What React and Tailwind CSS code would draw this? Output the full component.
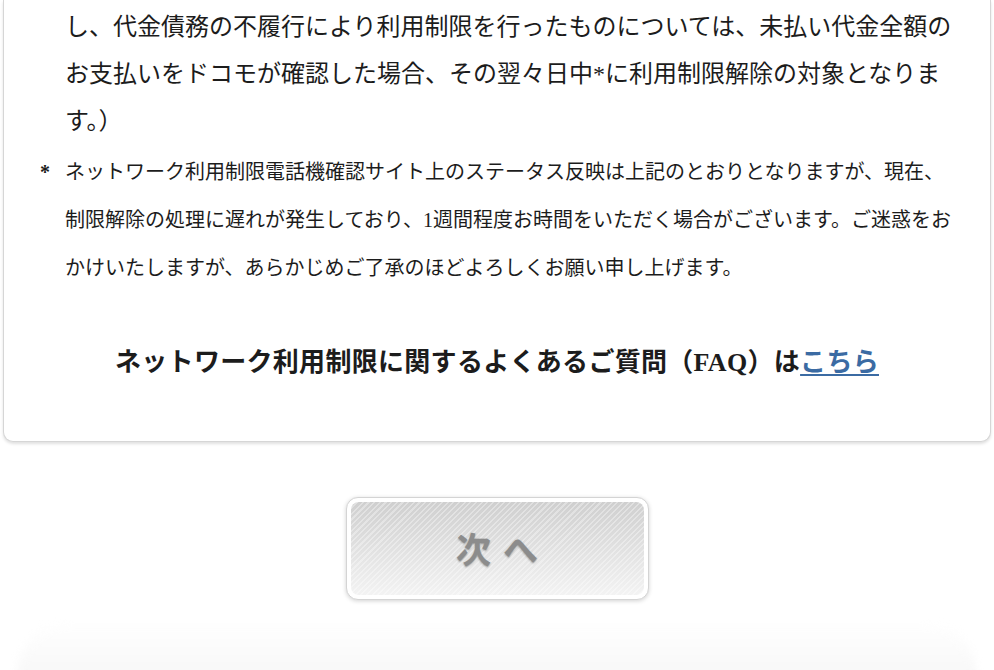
import React from "react";

const serif = "font-['Liberation_Serif','Noto_Sans_CJK_JP',serif]";

function NextButton() {
    return (
        <div className="flex justify-center">
            <div className="w-[303px] h-[103px] rounded-[12px] border border-[#d4d4d4] bg-white p-[4px] shadow-[0_1px_4px_rgba(0,0,0,0.18)]">
                <div className="h-full w-full rounded-[8px] flex items-center justify-center bg-[image:repeating-linear-gradient(135deg,rgba(255,255,255,0.35)_0px,rgba(255,255,255,0.35)_1.5px,transparent_1.5px,transparent_4px),linear-gradient(to_bottom,#cfcfcf,#f3f3f3)]">
                    <span className="font-['Noto_Sans_CJK_JP',sans-serif] text-[35px] font-bold text-[#8c8c8c] tracking-[2px] pl-[2px] [text-shadow:0_1px_2px_rgba(0,0,0,0.35)]">
                        次 へ
                    </span>
                </div>
            </div>
        </div>
    );
}

export default function App() {
    return (
        <div className={`min-h-[670px] bg-white overflow-hidden ${serif} text-[#1c1c1c]`}>
            <div className="mx-[3px] w-[988px] rounded-b-[10px] border border-t-0 border-[#d6d6d6] bg-white shadow-[0_2px_3px_rgba(0,0,0,0.12)] pt-[4px] pb-[58px]">
                <p className="pl-[61px] text-[24px] leading-[47px] whitespace-nowrap">
                    <span className="block">し、代金債務の不履行により利用制限を行ったものについては、未払い代金全額の</span>
                    <span className="block">お支払いをドコモが確認した場合、その翌々日中*に利用制限解除の対象となりま</span>
                    <span className="block">す。）</span>
                </p>
                <div className="mt-[3px] flex text-[20px] leading-[48px] whitespace-nowrap">
                    <span className="w-[61px] pl-[36px] shrink-0 font-bold">*</span>
                    <div>
                        <span className="block">ネットワーク利用制限電話機確認サイト上のステータス反映は上記のとおりとなりますが、現在、</span>
                        <span className="block">制限解除の処理に遅れが発生しており、1週間程度お時間をいただく場合がございます。ご迷惑をお</span>
                        <span className="block">かけいたしますが、あらかじめご了承のほどよろしくお願い申し上げます。</span>
                    </div>
                </div>
                <p className="mt-[51px] text-center text-[26px] leading-[40px] font-bold tracking-[0.3px]">
                    ネットワーク利用制限に関するよくあるご質問（FAQ）は
                    <a href="#" className="text-[#3b6ba3] underline underline-offset-[3px]">こちら</a>
                </p>
            </div>

            <div className="mt-[55px]">
                <NextButton />
            </div>

            <div className="mx-[18px] mt-[22px] h-[60px] rounded-t-[50px] bg-gradient-to-b from-white to-[#f7f7f7] blur-[4px]" />
        </div>
    );
}
